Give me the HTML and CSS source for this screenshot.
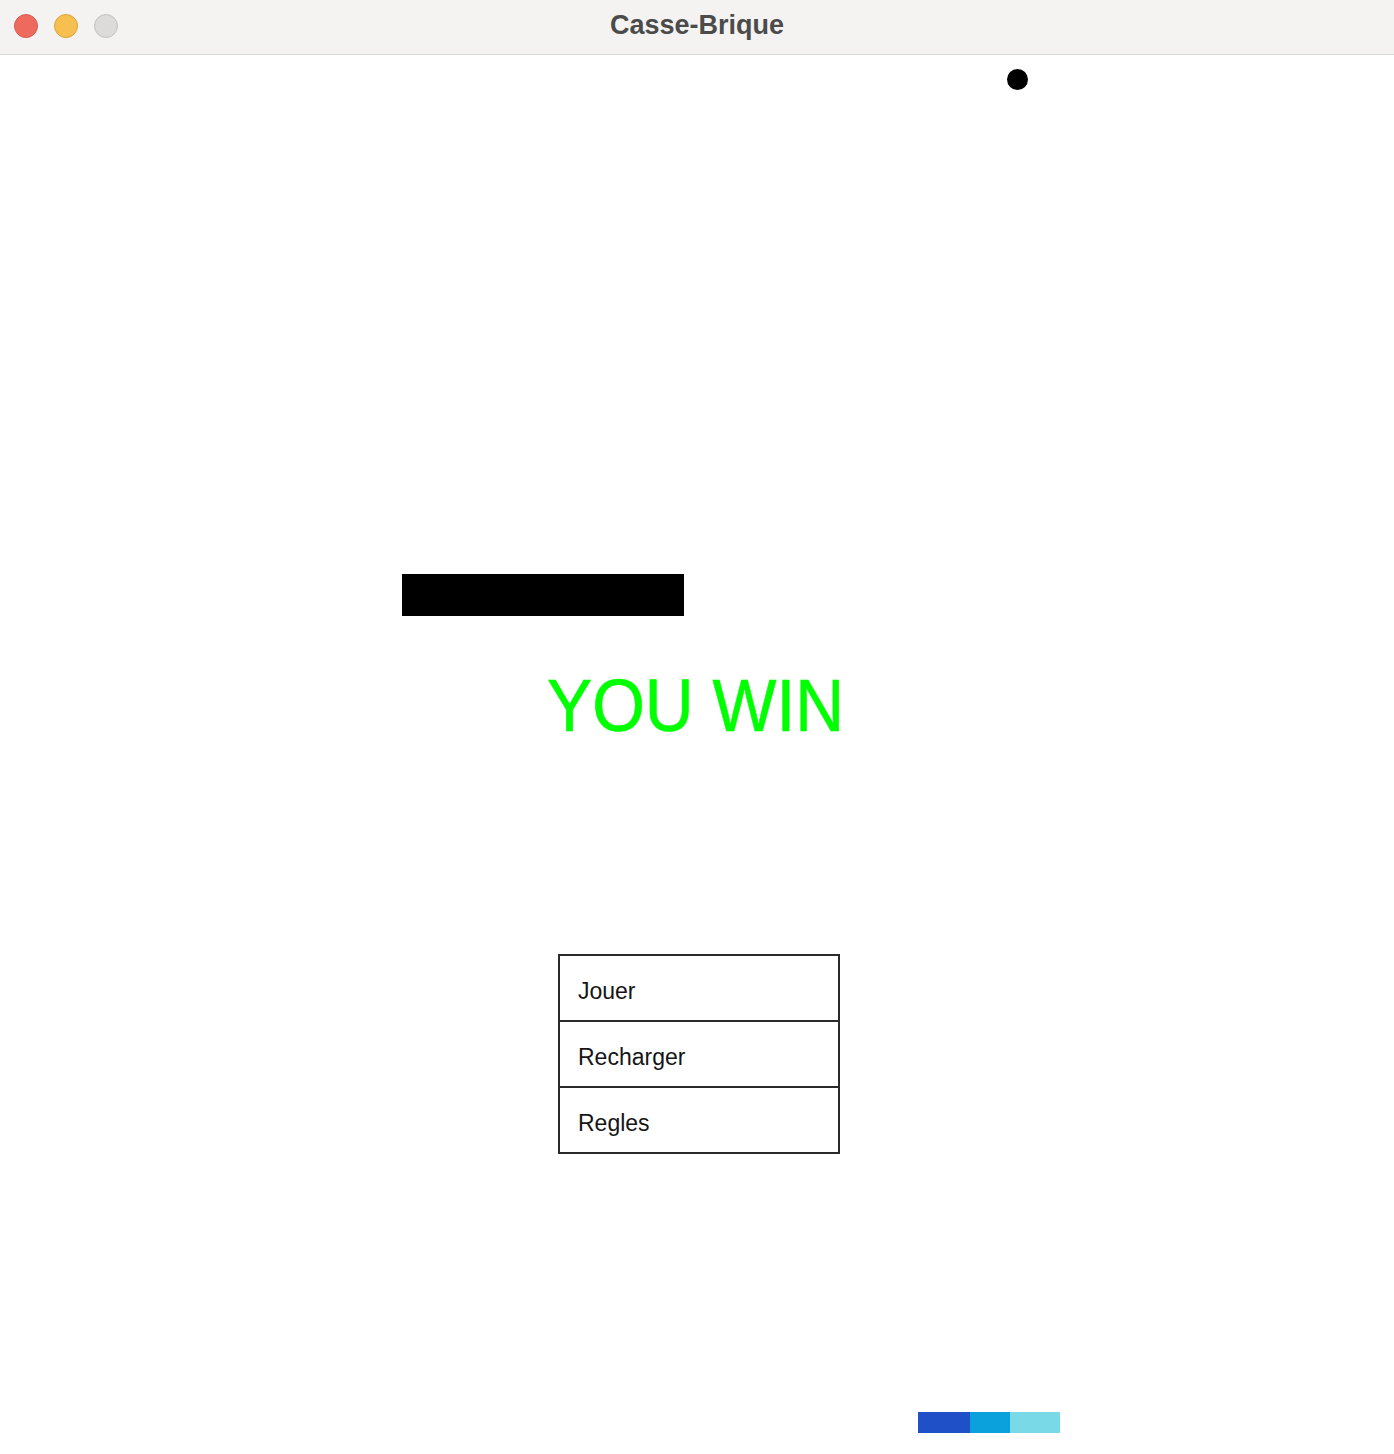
FILE: index.html
```html
<!DOCTYPE html>
<html lang="fr">
<head>
<meta charset="utf-8">
<title>Casse-Brique</title>
<link rel="stylesheet" href="styles.css">
</head>
<body>
<div class="window">
  <header class="titlebar">
    <div class="lights">
      <span class="light red"></span>
      <span class="light yellow"></span>
      <span class="light gray"></span>
    </div>
    <div class="title">Casse-Brique</div>
  </header>
  <main class="canvas">
    <div class="ball"></div>
    <div class="paddle"></div>
    <div class="win">YOU WIN</div>
    <div class="menu">
      <div class="menu-item">Jouer</div>
      <div class="menu-item">Recharger</div>
      <div class="menu-item">Regles</div>
    </div>
    <div class="bricks">
      <span class="brick b1"></span>
      <span class="brick b2"></span>
      <span class="brick b3"></span>
    </div>
  </main>
</div>
</body>
</html>
```
FILE: styles.css
```css
html, body {
  margin: 0;
  padding: 0;
  background: #ffffff;
}
.window {
  width: 1394px;
  height: 1454px;
  display: flex;
  flex-direction: column;
  background: #ffffff;
  overflow: hidden;
}
.titlebar {
  position: relative;
  height: 54px;
  flex: 0 0 54px;
  background: #f4f3f1;
  border-bottom: 1px solid #d9d9d9;
  display: flex;
  align-items: center;
  justify-content: center;
}
.lights {
  position: absolute;
  left: 14px;
  top: 14px;
  display: flex;
  gap: 16px;
}
.light {
  width: 22px;
  height: 22px;
  border-radius: 50%;
  display: block;
}
.red { background: #ee6a5f; border: 1px solid #d85a4f; }
.yellow { background: #f6bf4f; border: 1px solid #d9a440; }
.gray { background: #dcdbda; border: 1px solid #c3c2c1; }
.title {
  font-family: "Liberation Sans", Arial, sans-serif;
  font-weight: bold;
  font-size: 27px;
  color: #4b4b4b;
  margin-top: -3px;
}
.canvas {
  position: relative;
  flex: 1 1 auto;
  background: #ffffff;
}
.ball {
  position: absolute;
  left: 1007px;
  top: 14px;
  width: 21px;
  height: 21px;
  border-radius: 50%;
  background: #000;
}
.paddle {
  position: absolute;
  left: 402px;
  top: 519px;
  width: 282px;
  height: 42px;
  background: #000;
}
.win {
  position: absolute;
  left: 547px;
  top: 614px;
  font-family: "Liberation Sans", Arial, sans-serif;
  font-size: 74px;
  line-height: 74px;
  color: #00ff00;
  white-space: nowrap;
  transform: scaleX(0.915);
  transform-origin: left top;
  -webkit-text-stroke: 0.6px #00ff00;
}
.menu {
  position: absolute;
  left: 558px;
  top: 899px;
  width: 278px;
  border: 2px solid #2b2b2b;
  display: flex;
  flex-direction: column;
  background: #fff;
}
.menu-item {
  height: 57px;
  padding: 7px 0 0 18px;
  display: flex;
  align-items: center;
  font-family: "Liberation Sans", Arial, sans-serif;
  font-size: 23px;
  color: #151515;
}
.menu-item + .menu-item {
  border-top: 2px solid #2b2b2b;
}
.bricks {
  position: absolute;
  left: 918px;
  top: 1357px;
  display: flex;
  height: 21px;
}
.brick { display: block; height: 21px; }
.b1 { width: 52px; background: #2050c8; }
.b2 { width: 40px; background: #0aa1dc; }
.b3 { width: 50px; background: #79d9e6; }
```
